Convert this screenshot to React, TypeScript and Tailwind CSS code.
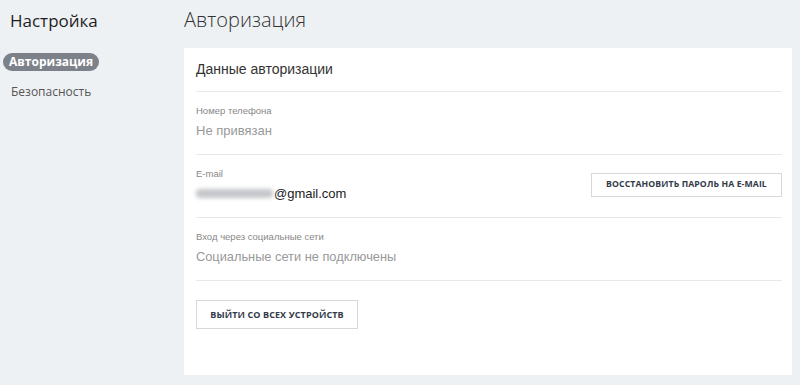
export default function App() {
  return (
    <div className="flex h-[385px] w-[800px] bg-[#eef1f4] font-['Open_Sans',sans-serif]">
      <aside className="w-[184px] shrink-0 pt-[8px]">
        <h1 className="pl-[10px] text-[17px] leading-[26px] text-[#1e1e1e]">Настройка</h1>
        <nav className="mt-[19px] flex flex-col items-start">
          <span className="ml-[3px] rounded-full bg-[#7d8189] px-[6px] text-[12px] font-bold leading-[18px] text-white">
            Авторизация
          </span>
          <span className="ml-[11px] mt-[12px] text-[12px] leading-[18px] text-[#555]">Безопасность</span>
        </nav>
      </aside>
      <main className="flex flex-1 flex-col pr-[8px] pb-[10px]">
        <h2 className="pt-[6px] text-[20px] font-light leading-[28px] text-[#333]">Авторизация</h2>
        <section className="mt-[14px] flex-1 bg-white px-[12px] pr-[10px] font-['Liberation_Sans',Arial,sans-serif]">
          <div className="flex h-[44px] items-center border-b border-[#e6e8eb] text-[14px] text-[#333]">
            Данные авторизации
          </div>
          <div className="flex h-[63px] flex-col justify-center border-b border-[#e6e8eb] pb-[3px]">
            <div className="text-[9.5px] leading-[14px] text-[#888]">Номер телефона</div>
            <div className="mt-[4px] text-[13px] leading-[18px] text-[#999]">Не привязан</div>
          </div>
          <div className="flex h-[63px] items-center justify-between border-b border-[#e6e8eb] pb-[3px]">
            <div className="flex flex-col">
              <div className="text-[9.5px] leading-[14px] text-[#888]">E-mail</div>
              <div className="mt-[4px] flex items-center text-[13px] leading-[18px] text-[#222]">
                <span className="mr-[1px] h-[9px] w-[77px] rounded-sm bg-[#c4c6c9] blur-[2px]" />
                @gmail.com
              </div>
            </div>
            <button className="h-[24px] w-[191px] border border-[#d5d8dc] bg-white font-['Open_Sans',sans-serif] text-[8.7px] font-bold tracking-[0.1px] text-[#333a48]">
              ВОССТАНОВИТЬ ПАРОЛЬ НА E-MAIL
            </button>
          </div>
          <div className="flex h-[63px] flex-col justify-center border-b border-[#e6e8eb] pb-[3px]">
            <div className="text-[9.5px] leading-[14px] text-[#888]">Вход через социальные сети</div>
            <div className="mt-[4px] text-[12.8px] leading-[18px] text-[#999]">Социальные сети не подключены</div>
          </div>
          <div className="pt-[19px]">
            <button className="h-[29px] w-[162px] border border-[#d5d8dc] bg-white font-['Open_Sans',sans-serif] text-[9px] font-bold tracking-[0.1px] text-[#333a48]">
              ВЫЙТИ СО ВСЕХ УСТРОЙСТВ
            </button>
          </div>
        </section>
      </main>
    </div>
  );
}
